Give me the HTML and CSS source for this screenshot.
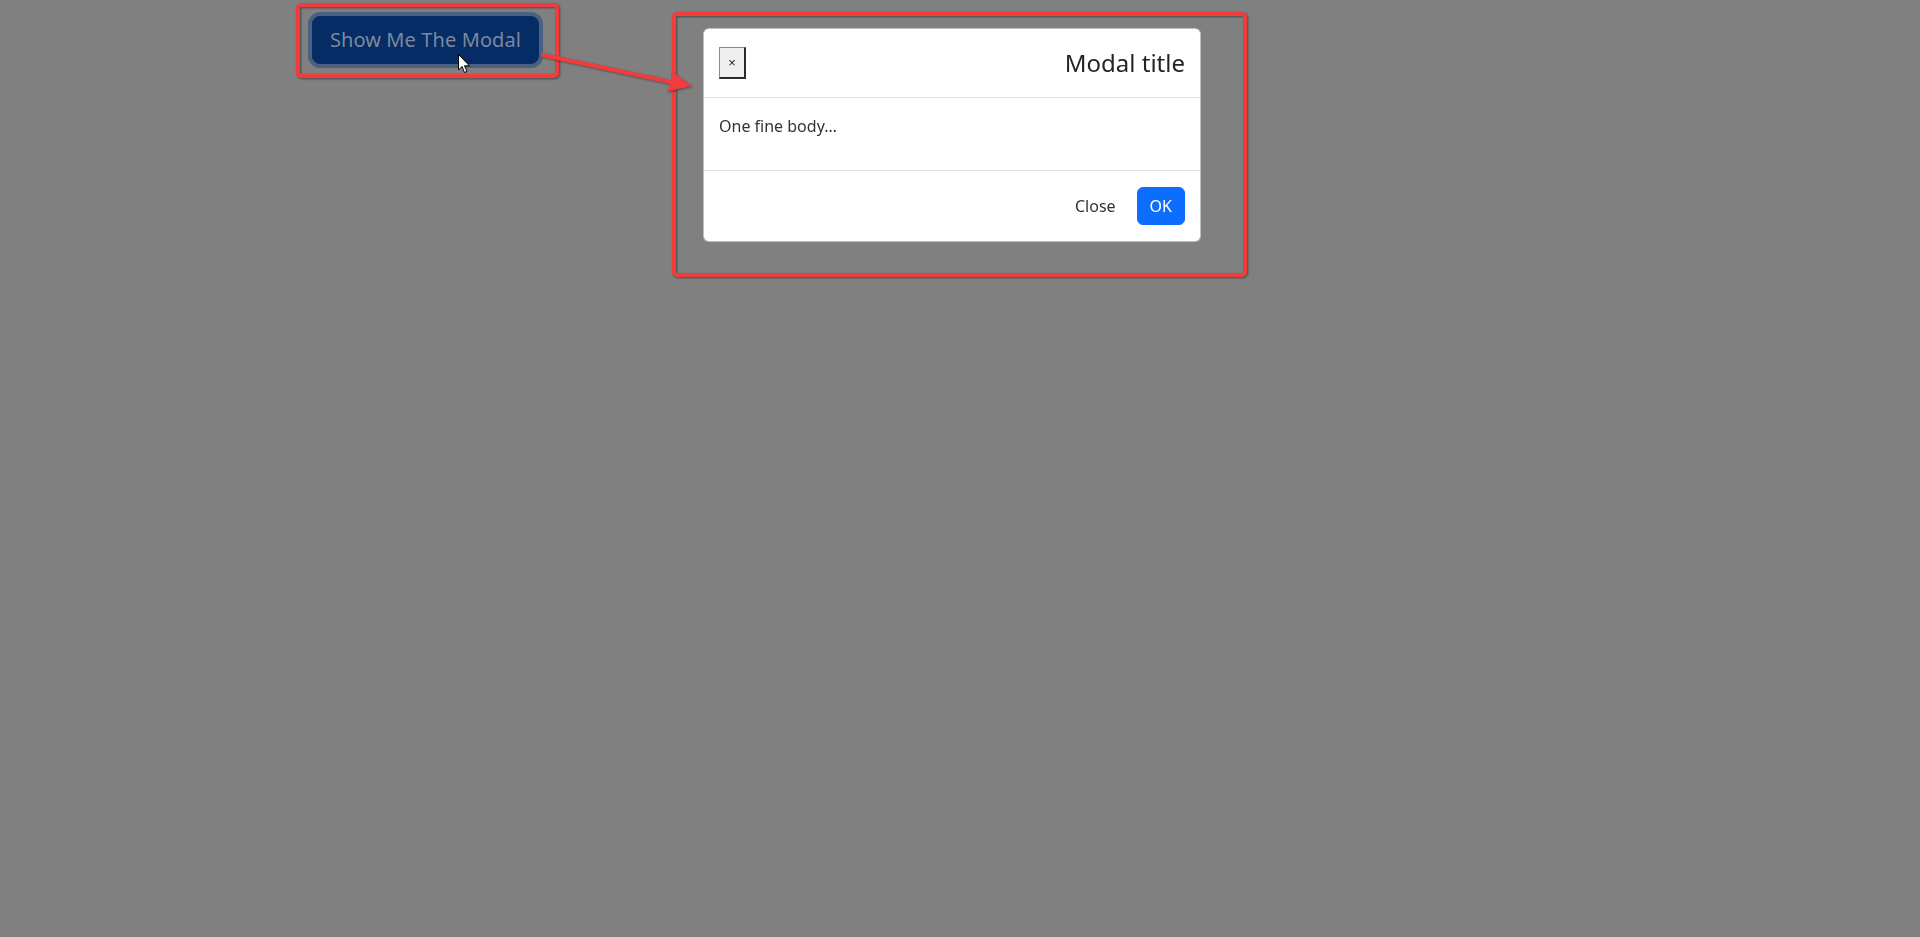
FILE: index.html
```html
<!DOCTYPE html>
<html lang="en">
<head>
<meta charset="utf-8">
<title>Modal</title>
<link rel="stylesheet" href="styles.css">
</head>
<body>
<div class="page">
  <button class="btn-show" type="button">Show Me The Modal</button>
</div>

<div class="modal-layer">
  <div class="modal">
    <div class="modal-header">
      <button class="x-btn" type="button">×</button>
      <h4 class="modal-title">Modal title</h4>
    </div>
    <div class="modal-body">
      <p>One fine body…</p>
    </div>
    <div class="modal-footer">
      <button class="btn btn-link" type="button">Close</button>
      <button class="btn btn-primary" type="button">OK</button>
    </div>
  </div>
</div>

<div class="annot annot-button"></div>
<div class="annot annot-modal"></div>
<svg class="annot-arrow" width="1920" height="120" viewBox="0 0 1920 120">
  <line x1="543" y1="55" x2="672" y2="82.3" stroke="#f03c3c" stroke-width="4" stroke-linecap="round"/>
  <polygon points="692,86 667,91.5 671,82 671.8,71.5" fill="#f03c3c"/>
</svg>
<svg class="cursor" width="13" height="20" viewBox="0 0 13 20">
  <path d="M0.5 0.5 L0.5 16 L4 12.5 L6.5 18.5 L9 17.5 L6.5 11.8 L11.5 11.8 Z" fill="#fff" stroke="#000" stroke-width="1" stroke-linejoin="round"/>
</svg>
</body>
</html>
```

FILE: styles.css
```css
html, body {
  margin: 0;
  padding: 0;
  background: #808080;
  font-family: "Noto Sans", "Open Sans", "Liberation Sans", sans-serif;
  color: #212529;
}

.page {
  padding: 16px 0 0 312px;
  height: 937px;
  box-sizing: border-box;
}

.btn-show {
  display: block;
  font-family: inherit;
  font-size: 20px;
  line-height: 30px;
  padding: 8px 16px;
  height: 48px;
  width: 227px;
  border: 1px solid #052c65;
  border-radius: 8px;
  background: #052c65;
  color: #7d889e;
  box-shadow: 0 0 0 4px #4c617f;
  white-space: nowrap;
  letter-spacing: 0.1px;
}

.modal-layer {
  position: fixed;
  top: 28px;
  left: 703px;
}

.modal {
  width: 498px;
  background: #fff;
  border: 1px solid rgba(0, 0, 0, 0.25);
  border-radius: 6px;
  box-sizing: border-box;
  overflow: hidden;
}

.modal-header {
  display: flex;
  align-items: center;
  justify-content: space-between;
  padding: 16px 15px 16px 15px;
  border-bottom: 1px solid #dee2e6;
}

.x-btn {
  width: 27px;
  height: 32px;
  padding: 0;
  background: #efefef;
  border-style: solid;
  border-width: 1px 2px 2px 1px;
  border-color: #8a8a8a #2b2b2b #2b2b2b #8a8a8a;
  font-family: "Liberation Sans", Arial, sans-serif;
  font-size: 13px;
  color: #222;
  line-height: 1;
}

.modal-title {
  margin: 0;
  font-size: 24px;
  font-weight: 400;
  line-height: 36px;
  color: #212529;
}

.modal-body {
  padding: 16px 15px;
  border-bottom: 1px solid #dee2e6;
}

.modal-body p {
  margin: 0 0 16px;
  font-size: 16px;
  line-height: 24px;
  color: #333;
}

.modal-footer {
  display: flex;
  justify-content: flex-end;
  align-items: center;
  padding: 12px 11px;
}

.btn {
  margin: 4px;
  font-family: inherit;
  font-size: 16px;
  line-height: 24px;
  padding: 6px 12px;
  border-radius: 6px;
  border: 1px solid transparent;
}

.btn-link {
  background: transparent;
  color: #333;
}

.btn-primary {
  background: #0d6efd;
  border-color: #0d6efd;
  color: #fff;
}

.annot {
  position: absolute;
  border: 4px solid #f03c3c;
  border-radius: 5px;
  box-sizing: border-box;
  filter: drop-shadow(1px 1px 1px rgba(0, 0, 0, 0.45));
}

.annot-button {
  left: 296px;
  top: 3px;
  width: 263px;
  height: 75px;
}

.annot-modal {
  left: 672px;
  top: 12px;
  width: 575px;
  height: 265px;
}

.annot-arrow {
  position: absolute;
  left: 0;
  top: 0;
  filter: drop-shadow(1px 1px 1px rgba(0, 0, 0, 0.4));
}

.cursor {
  position: absolute;
  left: 458px;
  top: 54px;
}
```
